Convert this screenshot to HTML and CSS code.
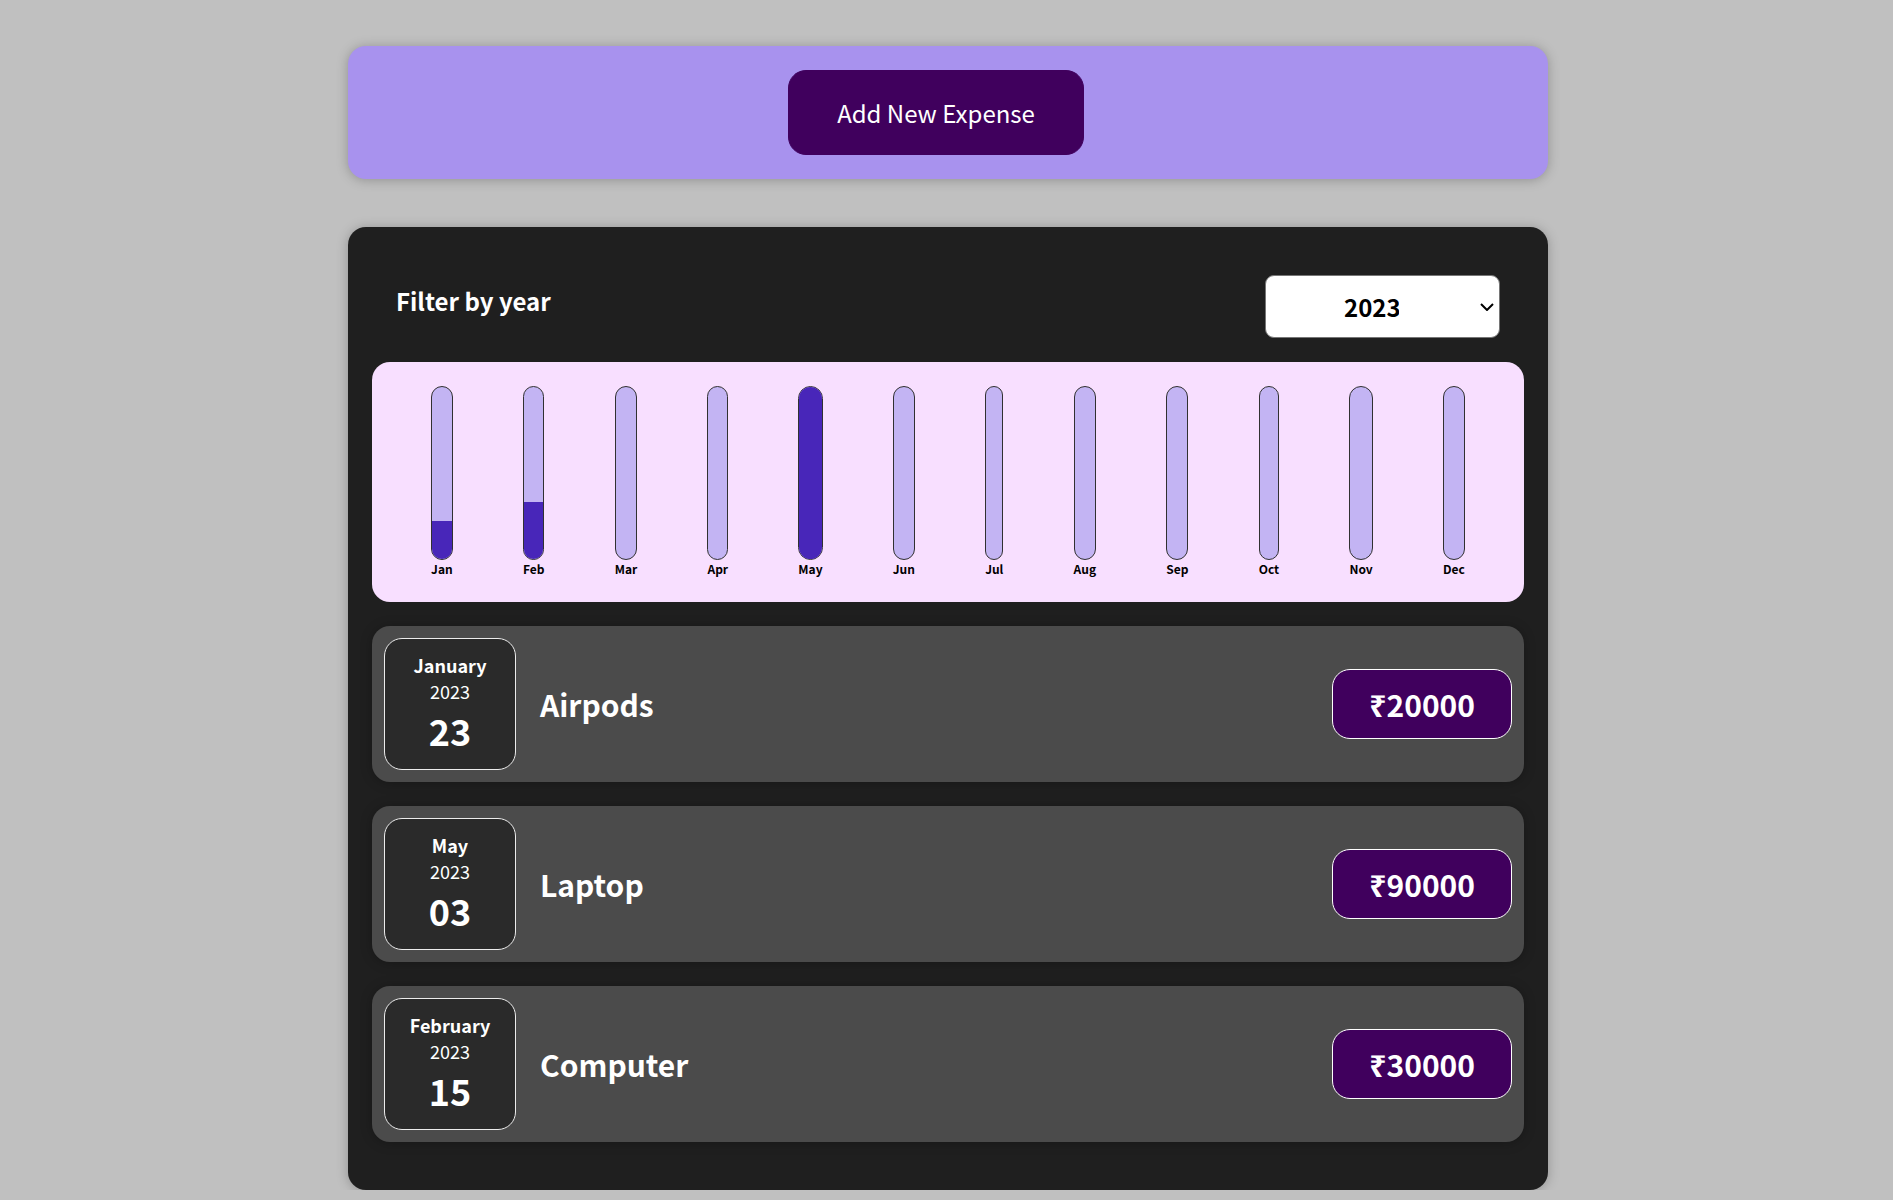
FILE: index.html
```html
<!DOCTYPE html>
<html lang="en">
<head>
<meta charset="utf-8">
<title>Expenses</title>
<link rel="stylesheet" href="styles.css">
</head>
<body>
<div class="new-expense">
  <button class="new-expense__btn" type="button">Add New Expense</button>
</div>

<div class="expenses card">
  <div class="expenses-filter">
    <div class="expenses-filter__control">
      <label class="expenses-filter__label">Filter by year</label>
      <div class="select-wrap">
        <select class="expenses-filter__select">
          <option>2023</option>
          <option>2022</option>
          <option>2021</option>
          <option>2020</option>
        </select>
        <svg class="select-chevron" width="14" height="8" viewBox="0 0 14 8" aria-hidden="true"><path d="M1 1 L7 7 L13 1" fill="none" stroke="#000" stroke-width="2"/></svg>
      </div>
    </div>
  </div>

  <div class="chart">
    <div class="chart-bar"><div class="chart-bar__inner"><div class="chart-bar__fill" style="height:22.2%"></div></div><div class="chart-bar__label">Jan</div></div>
    <div class="chart-bar"><div class="chart-bar__inner"><div class="chart-bar__fill" style="height:33.3%"></div></div><div class="chart-bar__label">Feb</div></div>
    <div class="chart-bar"><div class="chart-bar__inner"><div class="chart-bar__fill" style="height:0%"></div></div><div class="chart-bar__label">Mar</div></div>
    <div class="chart-bar"><div class="chart-bar__inner"><div class="chart-bar__fill" style="height:0%"></div></div><div class="chart-bar__label">Apr</div></div>
    <div class="chart-bar"><div class="chart-bar__inner"><div class="chart-bar__fill" style="height:100%"></div></div><div class="chart-bar__label">May</div></div>
    <div class="chart-bar"><div class="chart-bar__inner"><div class="chart-bar__fill" style="height:0%"></div></div><div class="chart-bar__label">Jun</div></div>
    <div class="chart-bar"><div class="chart-bar__inner"><div class="chart-bar__fill" style="height:0%"></div></div><div class="chart-bar__label">Jul</div></div>
    <div class="chart-bar"><div class="chart-bar__inner"><div class="chart-bar__fill" style="height:0%"></div></div><div class="chart-bar__label">Aug</div></div>
    <div class="chart-bar"><div class="chart-bar__inner"><div class="chart-bar__fill" style="height:0%"></div></div><div class="chart-bar__label">Sep</div></div>
    <div class="chart-bar"><div class="chart-bar__inner"><div class="chart-bar__fill" style="height:0%"></div></div><div class="chart-bar__label">Oct</div></div>
    <div class="chart-bar"><div class="chart-bar__inner"><div class="chart-bar__fill" style="height:0%"></div></div><div class="chart-bar__label">Nov</div></div>
    <div class="chart-bar"><div class="chart-bar__inner"><div class="chart-bar__fill" style="height:0%"></div></div><div class="chart-bar__label">Dec</div></div>
  </div>

  <ul class="expenses-list">
    <li class="expense-item card">
      <div class="expense-date">
        <div class="expense-date__month">January</div>
        <div class="expense-date__year">2023</div>
        <div class="expense-date__day">23</div>
      </div>
      <div class="expense-item__description">
        <h2 class="expense-item__title">Airpods</h2>
        <div class="expense-item__price">₹20000</div>
      </div>
    </li>
    <li class="expense-item card">
      <div class="expense-date">
        <div class="expense-date__month">May</div>
        <div class="expense-date__year">2023</div>
        <div class="expense-date__day">03</div>
      </div>
      <div class="expense-item__description">
        <h2 class="expense-item__title">Laptop</h2>
        <div class="expense-item__price">₹90000</div>
      </div>
    </li>
    <li class="expense-item card">
      <div class="expense-date">
        <div class="expense-date__month">February</div>
        <div class="expense-date__year">2023</div>
        <div class="expense-date__day">15</div>
      </div>
      <div class="expense-item__description">
        <h2 class="expense-item__title">Computer</h2>
        <div class="expense-item__price">₹30000</div>
      </div>
    </li>
  </ul>
</div>
</body>
</html>
```

FILE: styles.css
```css
* {
  box-sizing: border-box;
}

html {
  font-family: "Noto Sans CJK JP", "Noto Sans", sans-serif;
  font-size: 24px;
}

body {
  margin: 0;
  padding-left: 3px;
  background: #c0c0c0;
  overflow: hidden;
}

.card {
  border-radius: 18px;
  box-shadow: 0 1px 12px rgba(0, 0, 0, 0.25);
}

.new-expense {
  background-color: #a892ee;
  padding: 24px;
  margin: 46px auto 48px;
  width: 1200px;
  border-radius: 18px;
  text-align: center;
  box-shadow: 0 1px 12px rgba(0, 0, 0, 0.25);
}

.new-expense__btn {
  font: inherit;
  cursor: pointer;
  padding: 24px 48px;
  border: 1px solid #40005d;
  background-color: #40005d;
  color: #ffffff;
  border-radius: 18px;
  margin-right: 24px;
}

.expenses {
  padding: 24px;
  background-color: #1f1f1f;
  margin: 0 auto;
  width: 1200px;
}

.expenses-filter {
  color: #ffffff;
  padding: 0 24px;
}

.expenses-filter__control {
  display: flex;
  width: 100%;
  align-items: center;
  justify-content: space-between;
  margin: 24px 0;
}

.expenses-filter__label {
  font-weight: bold;
  margin-bottom: 12px;
}

.select-wrap {
  position: relative;
  display: flex;
}

.expenses-filter__select {
  -webkit-appearance: none;
  appearance: none;
  font: inherit;
  font-weight: bold;
  padding: 12px 100px 12px 78px;
  border-radius: 9px;
  border: 1px solid #767676;
  background: #ffffff;
  color: #000000;
  width: 235px;
  height: 63px;
}

.select-chevron {
  position: absolute;
  right: 6px;
  top: 28px;
  pointer-events: none;
}

.chart {
  padding: 24px;
  border-radius: 18px;
  background-color: #f8dfff;
  text-align: center;
  display: flex;
  justify-content: space-around;
  height: 240px;
}

.chart-bar {
  height: 100%;
  display: flex;
  flex-direction: column;
  align-items: center;
}

.chart-bar__inner {
  flex: 1;
  width: 100%;
  border: 1px solid #313131;
  border-radius: 18px;
  background-color: #c3b4f3;
  overflow: hidden;
  display: flex;
  flex-direction: column;
  justify-content: flex-end;
}

.chart-bar__fill {
  background-color: #4826b9;
  width: 100%;
}

.chart-bar__label {
  font-weight: bold;
  font-size: 12px;
  line-height: 18px;
  text-align: center;
  color: #000000;
}

.expenses-list {
  list-style: none;
  padding: 0;
  margin: 0;
}

.expense-item {
  display: flex;
  justify-content: space-between;
  align-items: center;
  padding: 12px;
  margin: 24px 0;
  background-color: #4b4b4b;
}

.expense-date {
  display: flex;
  flex-direction: column;
  width: 132px;
  height: 132px;
  border: 1px solid #ececec;
  background-color: #2a2a2a;
  color: #ffffff;
  border-radius: 18px;
  align-items: center;
  justify-content: center;
  flex-shrink: 0;
}

.expense-date__month {
  font-size: 18px;
  font-weight: bold;
}

.expense-date__year {
  font-size: 18px;
}

.expense-date__day {
  font-size: 36px;
  font-weight: bold;
}

.expense-item__description {
  display: flex;
  flex-direction: row;
  align-items: center;
  justify-content: flex-start;
  flex: 1;
}

.expense-item__title {
  color: #ffffff;
  font-size: 30px;
  flex: 1;
  margin: 0 24px;
}

.expense-item__price {
  font-size: 30px;
  font-weight: bold;
  color: #ffffff;
  background-color: #40005d;
  border: 1px solid #ffffff;
  padding: 12px 36px;
  border-radius: 18px;
}
```
